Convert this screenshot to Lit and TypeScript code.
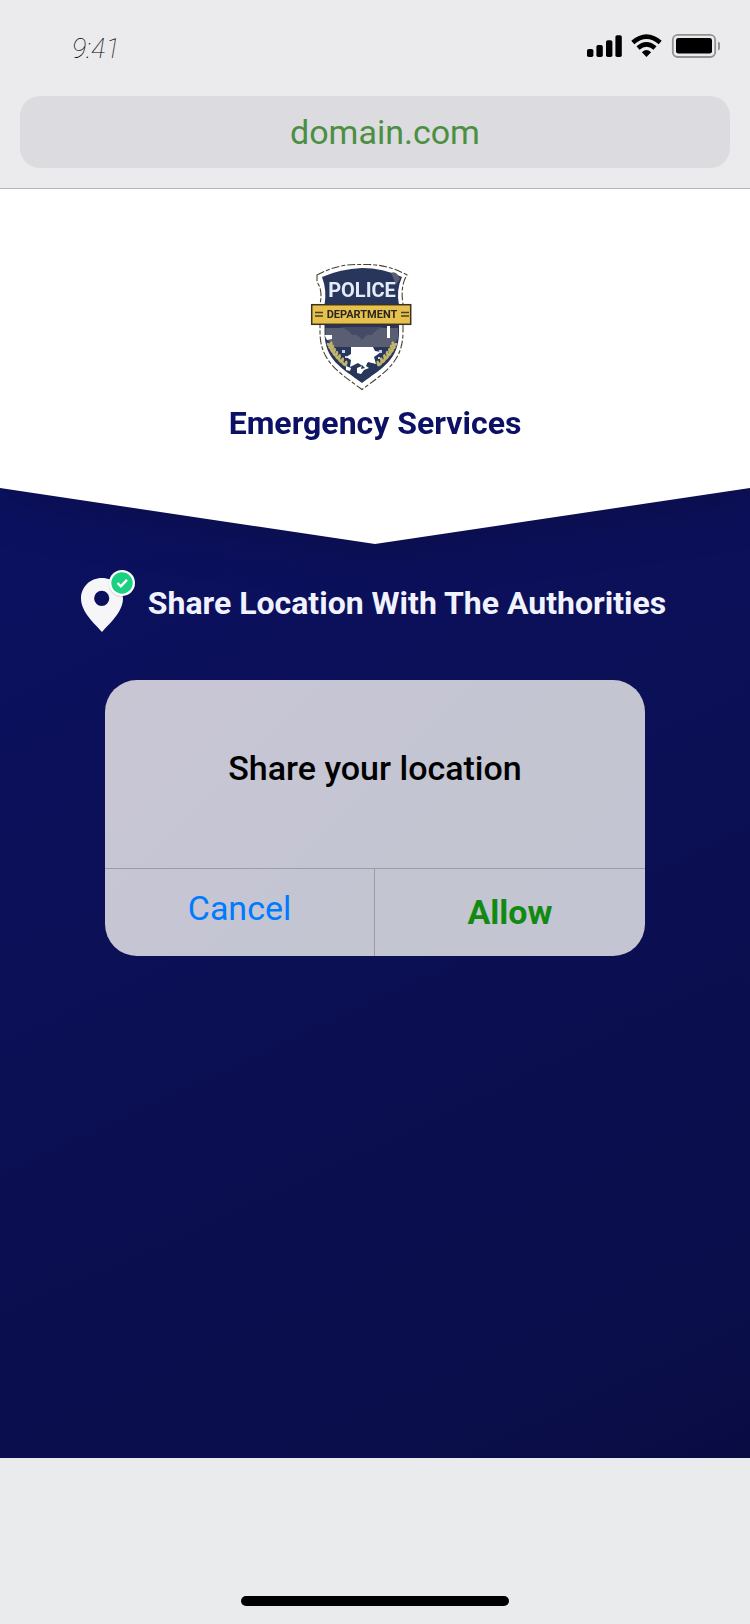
import { LitElement, html, css, svg } from "lit";
import { customElement } from "lit/decorators.js";

@customElement("status-bar")
class StatusBar extends LitElement {
  static styles = css`
    :host {
      display: flex;
      align-items: flex-start;
      justify-content: space-between;
      height: 96px;
      padding: 32px 30px 0 72px;
      box-sizing: border-box;
    }
    .time {
      font-size: 27px;
      font-weight: 100;
      font-style: italic;
      line-height: 34px;
      color: #000;
    }
    .icons {
      display: block;
    }
  `;
  render() {
    return html`
      <time class="time">9:41</time>
      <svg class="icons" width="134" height="28" viewBox="586 32 134 28" role="img" aria-label="Signal, Wi-Fi and battery full">
        <rect x="587" y="49" width="6.4" height="8" rx="1.8" />
        <rect x="596.4" y="45" width="6.4" height="12" rx="1.8" />
        <rect x="606" y="40.3" width="6.4" height="16.7" rx="1.8" />
        <rect x="615.4" y="35.3" width="6.4" height="21.7" rx="1.8" />
        <g fill="none" stroke="#000" stroke-width="4.6">
          <path d="M632.8 42.6Q646.5 30.8 660.2 42.6" />
          <path d="M638 48Q646.5 40.6 655 48" />
        </g>
        <path d="M646.5 57L641.9 52.3Q646.5 47.6 651.1 52.3Z" />
        <rect x="672.8" y="34.8" width="42.4" height="22.2" rx="5" fill="none" stroke="#929294" stroke-width="1.8" />
        <rect x="676" y="38" width="36" height="15.6" rx="2.4" />
        <path d="M718 41.6Q721 43 721 46Q721 49 718 50.4Z" fill="#929294" />
      </svg>
    `;
  }
}

@customElement("police-badge")
class PoliceBadge extends LitElement {
  static styles = css`
    :host {
      display: block;
      width: 102px;
      height: 128px;
    }
    .badge {
      display: block;
      width: 100%;
      height: 100%;
    }
    .top {
      font: 700 20px Roboto, sans-serif;
      fill: #e6ebf8;
      text-anchor: middle;
    }
    .band {
      font: 700 11px Roboto, sans-serif;
      fill: #2a2620;
      text-anchor: middle;
    }
  `;
  leaf(x: number, y: number, angle: number) {
    return svg`<ellipse cx=${x} cy=${y} rx="2.8" ry="1.5" fill="#c2b46a" transform="rotate(${angle} ${x} ${y})" />`;
  }
  render() {
    const steps = [0, 1, 2, 3, 4, 5, 6];
    return html`
      <svg class="badge" viewBox="310 263 102 128" role="img" aria-label="Police Department">
        <path d="M317 275Q335 265 355 264.500H369Q389 265 407 275Q400 286 403 304V332C403 362 384 373 362 389.500C340 373 320 362 320 332V304Q323 290 317 282Z"
          fill="#fff" stroke="#4a4032" stroke-width="1.1" stroke-dasharray="8 2 4 2" />
        <path d="M322 277Q340 269 362 268Q383 268 402 277Q396 290 399 305V332C399 360 382 368 362 383C342 368 324.500 360 324.500 332V305Q327 290 322 277Z" fill="#29365c" />
        <path d="M391 273Q395 271 398 275L400 279L396 284Z" fill="#5a5e72" />
        <path d="M325.500 328H398V338L393 347H334L325.500 338Z" fill="#5a5e72" />
        <path d="M338 327Q346 327 352 335Q358 334 362 340Q366 334 372 335Q378 327 386 327Z" fill="#454b66" />
        <path d="M324.500 335H332V339L327 340ZM387 326H390V338H387Z" fill="#fff" />
        <path d="M351 347H373L375 351L381 352L374 357L376 364L368 362L364 367L358 363L350 367L351 360L346 357L351 354Z" fill="#fff" />
        <path d="M357 368L362 366L364 362L368 361L366 366L369 368L364 370L361 374L357 373Z" fill="#fff" />
        <path d="M346 366L351 368L350 371L346 370Z" fill="#fff" />
        <path d="M362 365L365 368L361 369Z" fill="#29365c" />
        <path d="M342 350H345V353H342ZM379 350H382V353H379ZM345 356H347V358H345ZM378 357H380V359H378Z" fill="#cbd3e6" />
        ${steps.map((i) => {
          const dx = i * 1.3 + i * i * 0.2;
          const y = 344 + i * 3.2;
          return [
            this.leaf(331 + dx, y, 100),
            this.leaf(329 + dx, y + 1, 40),
            this.leaf(393 - dx, y, 80),
            this.leaf(395 - dx, y + 1, 140),
          ];
        })}
        <rect x="311.7" y="304.7" width="99" height="19.6" fill="#e6c14d" stroke="#3b3222" stroke-width="1.5" />
        <path d="M315 312.500H323M315 316H323M401 312.500H409M401 316H409" stroke="#4b4022" stroke-width="1.4" />
        <text class="top" x="362" y="297">POLICE</text>
        <text class="band" x="362" y="318">DEPARTMENT</text>
      </svg>
    `;
  }
}

@customElement("location-pin")
class LocationPin extends LitElement {
  static styles = css`
    :host {
      display: block;
    }
    .pin {
      display: block;
    }
  `;
  render() {
    return html`
      <svg class="pin" width="56" height="64" viewBox="81 569 56 64" aria-hidden="true">
        <path fill-rule="evenodd" fill="#f6f6f9"
          d="M103 578C91 578 82 587 82 598.500C82 612 96 624 103 632C110 624 124 612 124 598.500C124 587 115 578 103 578ZM102.700 590.700A7.600 7.600 0 1 1 102.700 605.900A7.600 7.600 0 1 1 102.700 590.700Z" />
        <circle cx="123" cy="584" r="13.500" fill="#00000018" />
        <circle cx="123" cy="583" r="13" fill="#fff" />
        <circle cx="123" cy="583" r="10.700" fill="#1ad183" />
        <path d="M118.500 583L121.800 586.300L128 579.800" fill="none" stroke="#fff" stroke-width="2.400" />
      </svg>
    `;
  }
}

@customElement("permission-dialog")
class PermissionDialog extends LitElement {
  static styles = css`
    :host {
      display: block;
      width: 72%;
      border-radius: 32px;
      overflow: hidden;
      color: #000;
      background: linear-gradient(135deg, #c9c6d4 0%, #c5c5d3 40%, #c3c5d1 60%, #c4c5d2 100%);
    }
    .message {
      margin: 0;
      padding: 68px 24px 80px;
      font-size: 34px;
      font-weight: 500;
      line-height: 40px;
      text-align: center;
    }
    .actions {
      display: grid;
      grid-template-columns: 1fr 1fr;
      border-top: 1px solid #9b9ba9;
    }
    .action {
      height: 87px;
      margin: 0;
      border: 0;
      background: none;
      font: 400 34px/40px Roboto, sans-serif;
      cursor: pointer;
    }
    .cancel {
      padding: 0 0 10px;
      color: #007aff;
      border-right: 1px solid #9b9ba9;
    }
    .allow {
      padding: 0 0 2px;
      color: #128a12;
      font-weight: 700;
    }
  `;
  render() {
    return html`
      <p class="message">Share your location</p>
      <div class="actions">
        <button class="action cancel" type="button">Cancel</button>
        <button class="action allow" type="button">Allow</button>
      </div>
    `;
  }
}

@customElement("app-root")
class AppRoot extends LitElement {
  static styles = css`
    :host {
      display: flex;
      flex-direction: column;
      min-height: 100vh;
      font-family: Roboto, sans-serif;
      background: #e9ebec;
    }
    .browser {
      position: relative;
      z-index: 1;
      background: #ebebed;
      border-bottom: 1px solid #b4b4b6;
      padding-bottom: 20px;
    }
    .address {
      margin: 0 20px;
      padding: 16px 0 16px 20px;
      border-radius: 20px;
      background: #dcdbe0;
      color: #4b8f41;
      font-size: 34px;
      line-height: 40px;
      text-align: center;
    }
    .page {
      flex: 1;
      display: flex;
      flex-direction: column;
      align-items: center;
      background: linear-gradient(155deg, #0b1162 15%, #0c1059 42%, #0b0f51 66%, #0a0e4c 85%, #090c43 100%);
    }
    .shade {
      align-self: stretch;
      filter: drop-shadow(0 8px 24px rgba(10, 10, 40, 0.35));
    }
    .hero {
      display: flex;
      flex-direction: column;
      align-items: center;
      padding: 74px 0 101px;
      background: #fff;
      clip-path: polygon(0 0, 100% 0, 100% calc(100% - 56px), 50% 100%, 0 calc(100% - 56px));
    }
    .logo {
      margin-right: 28px;
    }
    .brand {
      margin: 12px 0 0;
      color: #0d1166;
      font-size: 32px;
      font-weight: 700;
      line-height: 40px;
    }
    .share {
      position: relative;
      display: flex;
      align-items: center;
      gap: 12px;
      margin: 25px 4px 47px 0;
    }
    .title {
      margin: 0;
      padding-top: 4px;
      color: #f1f2ff;
      font-size: 32px;
      font-weight: 700;
      line-height: 40px;
    }
    .bottom {
      display: flex;
      align-items: flex-end;
      justify-content: center;
      height: 166px;
      padding-bottom: 18px;
      box-sizing: border-box;
    }
    .home {
      width: 268px;
      height: 10px;
      border-radius: 5px;
      background: #000;
    }
  `;
  render() {
    return html`
      <header class="browser">
        <status-bar></status-bar>
        <div class="address">domain.com</div>
      </header>
      <main class="page">
        <div class="shade">
          <section class="hero">
            <police-badge class="logo"></police-badge>
            <h1 class="brand">Emergency Services</h1>
          </section>
        </div>
        <div class="share">
          <location-pin></location-pin>
          <h2 class="title">Share Location With The Authorities</h2>
        </div>
        <permission-dialog role="dialog" aria-label="Share your location"></permission-dialog>
      </main>
      <footer class="bottom"><div class="home"></div></footer>
    `;
  }
}
